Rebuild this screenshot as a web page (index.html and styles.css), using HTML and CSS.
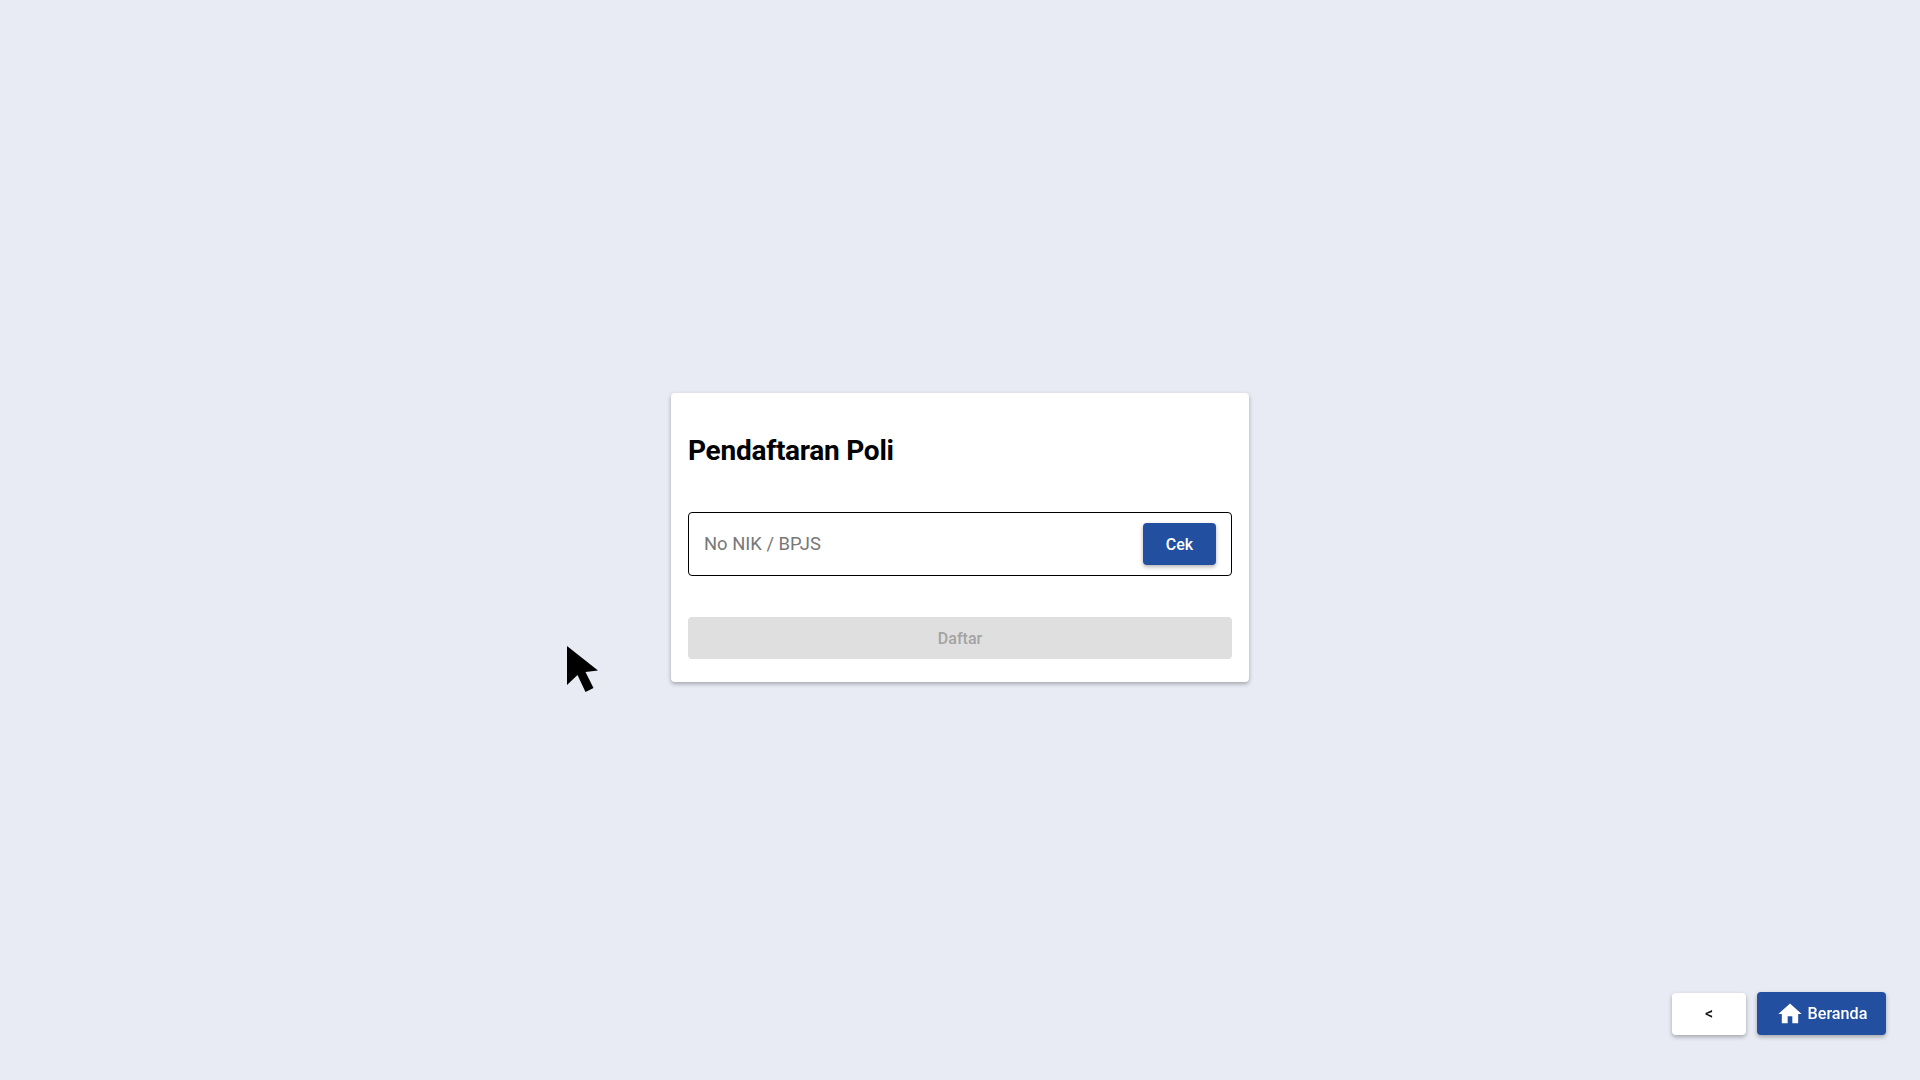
FILE: index.html
```html
<!DOCTYPE html>
<html lang="id">
<head>
<meta charset="utf-8">
<title>Pendaftaran Poli</title>
<link rel="stylesheet" href="styles.css">
</head>
<body>
<main class="page">
  <section class="card">
    <h1 class="title">Pendaftaran Poli</h1>
    <div class="field">
      <span class="placeholder">No NIK / BPJS</span>
      <button class="btn btn-primary btn-cek">Cek</button>
    </div>
    <button class="btn btn-disabled">Daftar</button>
  </section>
</main>
<nav class="actions">
  <button class="btn btn-back">&lt;</button>
  <button class="btn btn-primary btn-home">
    <svg class="home-icon" viewBox="0 0 24 24"><path d="M10 20v-6h4v6h5v-8h3L12 3 2 12h3v8z"/></svg>
    Beranda
  </button>
</nav>
<svg class="cursor" viewBox="0 0 32 46"><path d="M0 0 V39 L10.5 29 L18.5 46 L26.5 42 L18.5 26 L31 24.5 Z"/></svg>
</body>
</html>
```
FILE: styles.css
```css
* { box-sizing: border-box; }
html, body { margin: 0; height: 100%; }
body {
  background: #e8ebf3;
  font-family: Roboto, "Liberation Sans", sans-serif;
  overflow: hidden;
}
.page {
  height: 1080px;
  padding-top: 393px;
  display: flex;
  justify-content: center;
  align-items: flex-start;
}
.card {
  width: 578px;
  height: 289px;
  padding: 17px;
  background: #fff;
  border-radius: 4px;
  box-shadow: 0 2px 4px rgba(0,0,0,.3);
  display: flex;
  flex-direction: column;
}
.title {
  margin: 24px 0 44px;
  font-size: 28px;
  line-height: 34px;
  font-weight: 700;
  letter-spacing: -0.26px;
  color: #000;
}
.field {
  height: 64px;
  border: 1px solid #000;
  border-radius: 4px;
  display: flex;
  align-items: center;
  justify-content: space-between;
  padding: 0 15px;
  margin-bottom: 41px;
}
.placeholder { font-size: 18.4px; line-height: 24px; margin-top: -1px; color: #777; }
.btn {
  border: 0;
  border-radius: 4px;
  font-family: inherit;
  font-weight: 500;
  font-size: 16px;
  display: flex;
  align-items: center;
  justify-content: center;
}
.btn-primary {
  background: #224fa0;
  color: #fff;
  box-shadow: 0 2px 4px rgba(0,0,0,.3);
}
.btn-cek { width: 73px; height: 42px; }
.btn-disabled {
  height: 42px;
  width: 100%;
  background: #dfdfdf;
  color: #a3a3a3;
}
.actions {
  position: fixed;
  right: 34px;
  bottom: 45px;
  display: flex;
  gap: 11px;
  align-items: center;
}
.btn-back {
  width: 74px;
  height: 42px;
  background: #fff;
  color: #111;
  box-shadow: 0 2px 4px rgba(0,0,0,.3);
}
.btn-home { width: 129px; height: 43px; gap: 4px; font-size: 16.2px; }
.home-icon { width: 28px; height: 28px; fill: #fff; }
.cursor {
  position: absolute;
  left: 567px;
  top: 646px;
  width: 32px;
  height: 46px;
  fill: #000;
}
```
